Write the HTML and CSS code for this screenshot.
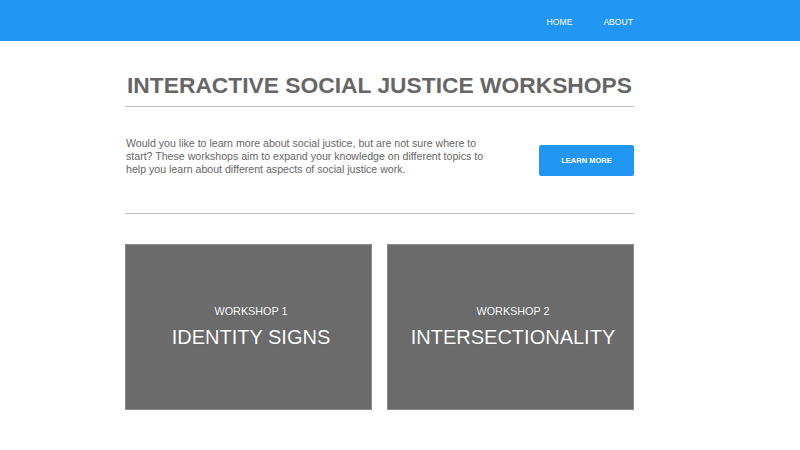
FILE: index.html
```html
<!DOCTYPE html>
<html>
<head>
<meta charset="utf-8">
<link rel="stylesheet" href="styles.css">
</head>
<body>
<header class="nav">
  <div class="nav-links">
    <a class="nav-link" href="#">HOME</a>
    <a class="nav-link" href="#">ABOUT</a>
  </div>
</header>
<main class="container">
  <h1 class="title">INTERACTIVE SOCIAL JUSTICE WORKSHOPS</h1>
  <hr class="rule">
  <section class="intro">
    <p class="intro-text">Would you like to learn more about social justice, but are not sure where to start? These workshops aim to expand your knowledge on different topics to help you learn about different aspects of social justice work.</p>
    <a class="btn" href="#">LEARN MORE</a>
  </section>
  <hr class="rule rule-lower">
  <section class="cards">
    <div class="card">
      <div class="card-sub">WORKSHOP 1</div>
      <div class="card-title">IDENTITY SIGNS</div>
    </div>
    <div class="card">
      <div class="card-sub">WORKSHOP 2</div>
      <div class="card-title">INTERSECTIONALITY</div>
    </div>
  </section>
</main>
</body>
</html>
```
FILE: styles.css
```css
* { box-sizing: border-box; }
html, body { margin: 0; padding: 0; background: #fff; }
body { font-family: "Liberation Sans", Arial, sans-serif; color: #666; }

.nav {
  height: 41px;
  background: #2196f3;
  display: flex;
  justify-content: flex-end;
  align-items: center;
}
.nav-links {
  display: flex;
  gap: 31px;
  margin-right: 167px;
  padding-top: 2px;
}
.nav-link {
  color: #fff;
  text-decoration: none;
  font-size: 8.6px;
}

.container {
  width: 509px;
  margin: 0 0 0 125px;
}
.title {
  margin: 29px 0 0;
  text-align: center;
  white-space: nowrap;
  font-size: 22.8px;
  font-weight: bold;
  color: #666;
  line-height: 30px;
}
.rule {
  border: 0;
  border-top: 1px solid #bbb;
  margin: 6px 0 0;
}
.intro {
  display: flex;
  justify-content: space-between;
  align-items: flex-start;
  margin-top: 30px;
}
.intro-text {
  margin: 0;
  width: 372px;
  padding-left: 1px;
  font-size: 10.6px;
  line-height: 13px;
  color: #666;
}
.btn {
  margin-top: 8px;
  width: 95px;
  height: 31px;
  background: #2196f3;
  color: #fff;
  font-size: 7.5px;
  font-weight: bold;
  text-decoration: none;
  display: flex;
  align-items: center;
  justify-content: center;
  border-radius: 2px;
}
.rule-lower { margin-top: 37px; }
.cards {
  display: grid;
  grid-template-columns: 1fr 1fr;
  gap: 15px;
  margin-top: 30px;
}
.card {
  height: 166px;
  background: #6b6b6b;
  border: 1px solid #8a8a8a;
  color: #fff;
  display: flex;
  flex-direction: column;
  align-items: center;
  justify-content: center;
  padding-left: 5px;
  text-shadow: 0 0 1px rgba(0,0,0,0.3);
}
.card-sub { font-size: 10.8px; }
.card-title { font-size: 20px; margin-top: 9px; }
```
